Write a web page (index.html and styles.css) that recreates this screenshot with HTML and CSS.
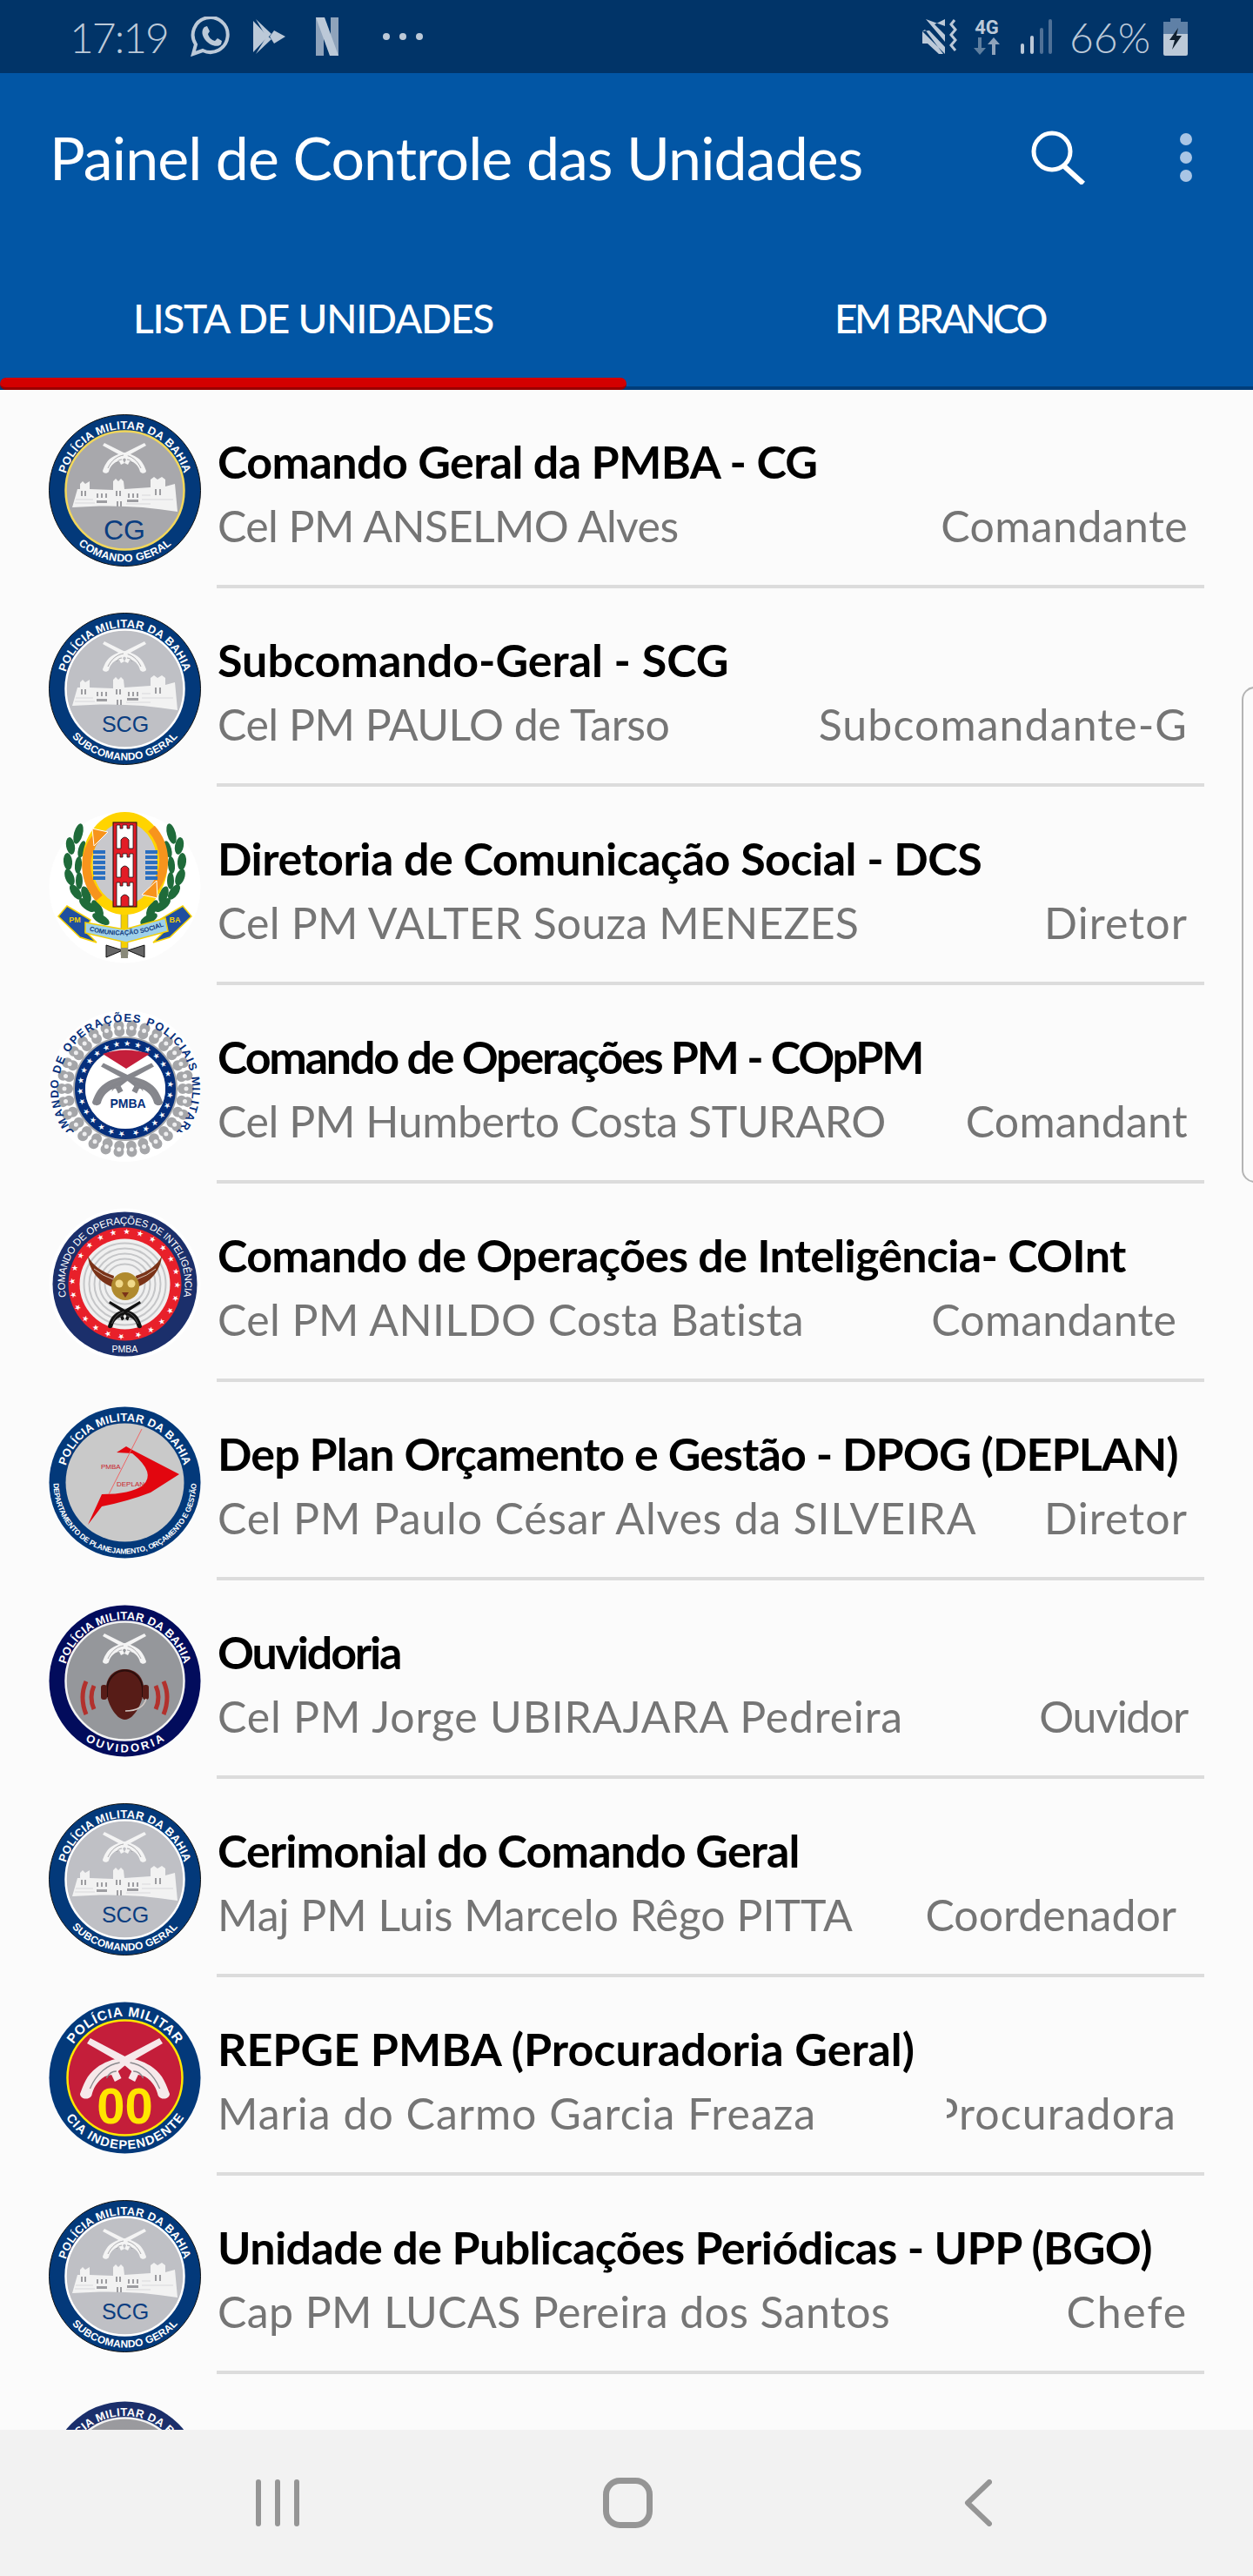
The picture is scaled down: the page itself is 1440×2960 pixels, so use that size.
FILE: index.html
```html
<!DOCTYPE html>
<html lang="pt-BR">
<head>
<meta charset="utf-8">
<title>Painel de Controle das Unidades</title>
<link rel="stylesheet" href="styles.css">
</head>
<body>
<svg class="sprite" width="0" height="0" aria-hidden="true">
<defs>
  <path id="arc-top" d="M17 87.5A70.5 70.5 0 0 1 158 87.5"/>
  <path id="arc-bot" d="M5.5 87.5A82 82 0 0 0 169.5 87.5"/>
  <path id="arc-big" d="M87.5 156.5A69 69 0 1 1 87.5 18.5A69 69 0 1 1 87.5 156.5"/>
  <path id="arc-cop" d="M88 168A77 77 0 1 1 88 14A77 77 0 1 1 88 168"/>
  <path id="arc-stars-a" d="M87.5 145A57.5 57.5 0 1 1 87.5 30A57.5 57.5 0 1 1 87.5 145"/>
  <path id="arc-stars-b" d="M88 140A49 49 0 1 1 88 42A49 49 0 1 1 88 140"/>
  <path id="arc-ban" d="M46 137Q88 150 133 132"/>
  <clipPath id="cop-clip"><rect x="0" y="0" width="175" height="141"/></clipPath>
  <g id="pistol">
    <path d="M0 4L2 1L24 12C30 13 36 15 40 18C46 22 48 28 50 33C50 36 45 37 43 34C42 30 40 26 35 23L31 22L29 26L25 24L27 20L22 16Z"/>
    <path fill="none" stroke="#8a8a8e" stroke-width=".7" d="M26 15C33 16 40 21 44 30M28 20C31 20 33 22 34 24"/>
  </g>
  <g id="pistols">
    <use href="#pistol" transform="translate(62 32)"/>
    <use href="#pistol" transform="translate(112 32) scale(-1 1)"/>
  </g>
  <g id="fort">
    <path fill="#f2f2f2" d="M0 35L6 14L9 14L9 8L12 5L15 8L20 5L20 14L47 15L47 5L50 2L53 5L56 2L59 5L60 14L90 12L90 3L94 0L98 3L103 0L107 3L107 11L118 8L121 40C80 33 40 32 0 35Z"/>
    <g fill="#9d9da1">
      <rect x="10" y="16" width="2" height="6"/><rect x="14" y="16" width="2" height="6"/>
      <rect x="28" y="19" width="2" height="5"/><rect x="33" y="19" width="2" height="5"/><rect x="38" y="19" width="2" height="5"/>
      <rect x="50" y="16" width="2" height="6"/><rect x="54" y="16" width="2" height="6"/>
      <rect x="64" y="19" width="2" height="5"/><rect x="69" y="19" width="2" height="5"/><rect x="74" y="19" width="2" height="5"/>
      <rect x="95" y="14" width="2" height="7"/><rect x="100" y="14" width="2" height="7"/>
      <rect x="28" y="27" width="12" height="3"/><rect x="63" y="26" width="13" height="3"/>
      <rect x="51" y="28" width="2" height="6"/><rect x="55" y="28" width="2" height="6"/>
    </g>
    <path fill="none" stroke="#cfcfd2" stroke-width=".7" d="M4 26H24M3 30H26M62 31H90M80 26H116M80 21H90"/>
  </g>
  <g id="cop-star-ring">
    <text class="logo-stars"><textPath href="#arc-stars-b" textLength="300">★★★★★★★★★★★★★★★★★★★★★★★★★★</textPath></text>
  </g>
</defs>
</svg>

<div class="screen">
  <header class="status">
    <div class="status-side">
      <span class="clock">17:19</span>
      <svg class="st-wa" viewBox="0 0 46 46"><path fill="none" stroke="#bcc9d8" stroke-width="4" d="M3 43L6 32A20 20 0 1 1 14 39Z"/><path fill="#bcc9d8" d="M16 12L19 11L22 17L20 20C21 24 24 27 28 28L31 25L36 28L35 32C30 36 22 33 17 27C13 22 12 16 16 12Z"/></svg>
      <svg class="st-play" viewBox="0 0 37 40"><path fill="#bcc9d8" d="M0 2L17 20L0 38Z"/><path fill="#bcc9d8" d="M3 0L21 17L16 22Z"/><path fill="#bcc9d8" d="M3 40L21 23L16 19Z"/><path fill="#bcc9d8" d="M24 13L37 20L24 28L19 20Z"/></svg>
      <svg class="st-n" viewBox="0 0 26 44"><path fill="#8fa3bb" d="M0 0H9V44H0Z"/><path fill="#8fa3bb" d="M17 0H26V44H17Z"/><path fill="#bcc9d8" d="M0 0H10L26 44H16Z"/></svg>
      <svg class="st-more" viewBox="0 0 46 8"><circle cx="4" cy="4" r="4" fill="#bcc9d8"/><circle cx="23" cy="4" r="4" fill="#bcc9d8"/><circle cx="42" cy="4" r="4" fill="#bcc9d8"/></svg>
    </div>
    <div class="status-side">
      <svg class="st-mute" viewBox="0 0 42 40"><path fill="#bcc9d8" d="M0 14L8 13L26 32V40ZM0 14V28L6 28L19 40H24L3 12ZM4 0L26 26V8ZM14 6L26 0V18Z"/><path fill="none" stroke="#bcc9d8" stroke-width="3" d="M37 1L33 6L38 12L33 18L38 24L33 30L38 36"/></svg>
      <div class="st-net"><span class="net-label">4G</span><svg class="net-arrows" viewBox="0 0 32 20"><path fill="#5f7f9f" d="M6 0H10V12H15L8 20L1 12H6Z"/><path fill="#8fa3bb" d="M22 20H26V8H31L24 0L17 8H22Z"/></svg></div>
      <svg class="st-sig" viewBox="0 0 37 40"><rect x="0" y="28" width="4" height="12" rx="2" fill="#bcc9d8"/><rect x="11" y="19" width="4" height="21" rx="2" fill="#bcc9d8"/><rect x="22" y="10" width="4" height="30" rx="2" fill="#4f7096"/><rect x="32" y="0" width="4" height="40" rx="2" fill="#4f7096"/></svg>
      <span class="pct">66%</span>
      <svg class="st-bat" viewBox="0 0 28 43"><path fill="#5f80a6" d="M8 0H20V4H28V18H0V4H8Z"/><path fill="#bcc9d8" d="M0 18H28V41Q28 43 26 43H2Q0 43 0 41Z"/><path fill="#10202f" d="M17 11L7 25H13L10 36L21 20H15Z"/></svg>
    </div>
  </header>

  <section class="appbar">
    <div class="toolbar">
      <h1 class="title">Painel de Controle das Unidades</h1>
      <svg class="ic-search" viewBox="0 0 62 62"><circle cx="24" cy="24" r="21" fill="none" stroke="#fff" stroke-width="5"/><path d="M38 41L60 61" stroke="#fff" stroke-width="6"/></svg>
      <svg class="ic-more" viewBox="0 0 14 56"><circle cx="7" cy="7" r="7" fill="#a9c5e5"/><circle cx="7" cy="28" r="7" fill="#a9c5e5"/><circle cx="7" cy="49" r="7" fill="#a9c5e5"/></svg>
    </div>
    <nav class="tabs">
      <div class="tab tab-active ls-n12">LISTA DE UNIDADES</div>
      <div class="tab ls-n35">EM BRANCO</div>
    </nav>
  </section>

  <main class="list">
    <article class="row">
      <svg class="logo" viewBox="0 0 175 175">
        <circle cx="87.5" cy="87.5" r="87" fill="#03397a" stroke="#111" stroke-width="1"/>
        <circle cx="87.5" cy="87.5" r="68" fill="#a8a8ac" stroke="#f2d75a" stroke-width="2.5"/>
        <use href="#pistols" fill="#f4f4f4"/><use href="#fort" x="27" y="72"/>
        <text class="logo-big" x="87" y="144" font-size="32">CG</text>
        <text class="logo-ring" font-size="13"><textPath href="#arc-top" startOffset="50%" textLength="182">POLÍCIA MILITAR DA BAHIA</textPath></text>
        <text class="logo-ring" font-size="12.5"><textPath href="#arc-bot" startOffset="50%" textLength="117">COMANDO GERAL</textPath></text>
      </svg>
      <div class="body"><div class="name ls-n06">Comando Geral da PMBA - CG</div><div class="sub"><span class="person ls-n06">Cel PM ANSELMO Alves</span><span class="role ls-p04">Comandante</span></div></div>
    </article>
    <article class="row">
      <svg class="logo" viewBox="0 0 175 175">
        <circle cx="87.5" cy="87.5" r="87" fill="#03397a" stroke="#111" stroke-width="1"/>
        <circle cx="87.5" cy="87.5" r="68" fill="#bfc0c5" stroke="#fff" stroke-width="2.5"/>
        <use href="#pistols" fill="#f4f4f4"/><use href="#fort" x="27" y="72"/>
        <text class="logo-big" x="88" y="137" font-size="25">SCG</text>
        <text class="logo-ring" font-size="13"><textPath href="#arc-top" startOffset="50%" textLength="182">POLÍCIA MILITAR DA BAHIA</textPath></text>
        <text class="logo-ring" font-size="12"><textPath href="#arc-bot" startOffset="50%" textLength="137">SUBCOMANDO GERAL</textPath></text>
      </svg>
      <div class="body"><div class="name">Subcomando-Geral - SCG</div><div class="sub"><span class="person ls-n05">Cel PM PAULO de Tarso</span><span class="role ls-p11">Subcomandante-G</span></div></div>
    </article>
    <article class="row">
      <svg class="logo" viewBox="0 0 175 175">
        <circle cx="87.5" cy="87.5" r="87" fill="#fff"/>
        <g fill="#1f6b3a">
          <ellipse cx="34" cy="26" rx="5" ry="12" transform="rotate(15 34 26)"/><ellipse cx="25" cy="40" rx="5" ry="10" transform="rotate(-10 25 40)"/><ellipse cx="38" cy="44" rx="4" ry="10" transform="rotate(15 38 44)"/><ellipse cx="22" cy="58" rx="5" ry="10" transform="rotate(-5 22 58)"/><ellipse cx="34" cy="62" rx="4" ry="10" transform="rotate(5 34 62)"/><ellipse cx="24" cy="76" rx="5" ry="10" transform="rotate(-20 24 76)"/><ellipse cx="35" cy="80" rx="4" ry="10"/><ellipse cx="31" cy="93" rx="5" ry="10" transform="rotate(-35 31 93)"/><ellipse cx="43" cy="96" rx="5" ry="10" transform="rotate(-20 43 96)"/><ellipse cx="44" cy="108" rx="5" ry="11" transform="rotate(-50 44 108)"/><ellipse cx="56" cy="112" rx="5" ry="11" transform="rotate(-30 56 112)"/><ellipse cx="60" cy="124" rx="5" ry="11" transform="rotate(-60 60 124)"/>
        </g>
        <g fill="#1f6b3a" transform="translate(175 0) scale(-1 1)">
          <ellipse cx="34" cy="26" rx="5" ry="12" transform="rotate(15 34 26)"/><ellipse cx="25" cy="40" rx="5" ry="10" transform="rotate(-10 25 40)"/><ellipse cx="38" cy="44" rx="4" ry="10" transform="rotate(15 38 44)"/><ellipse cx="22" cy="58" rx="5" ry="10" transform="rotate(-5 22 58)"/><ellipse cx="34" cy="62" rx="4" ry="10" transform="rotate(5 34 62)"/><ellipse cx="24" cy="76" rx="5" ry="10" transform="rotate(-20 24 76)"/><ellipse cx="35" cy="80" rx="4" ry="10"/><ellipse cx="31" cy="93" rx="5" ry="10" transform="rotate(-35 31 93)"/><ellipse cx="43" cy="96" rx="5" ry="10" transform="rotate(-20 43 96)"/><ellipse cx="44" cy="108" rx="5" ry="11" transform="rotate(-50 44 108)"/><ellipse cx="56" cy="112" rx="5" ry="11" transform="rotate(-30 56 112)"/><ellipse cx="60" cy="124" rx="5" ry="11" transform="rotate(-60 60 124)"/>
        </g>
        <rect x="83" y="115" width="8" height="50" fill="#f5d000" stroke="#777" stroke-width=".6"/>
        <path fill="#666" stroke="#111" stroke-width="1" d="M66 154L85 160L66 168ZM110 154L91 160L110 168Z"/>
        <rect x="83" y="157" width="8" height="12" fill="#8a8a7a"/>
        <ellipse cx="87.5" cy="60" rx="44" ry="53" fill="#c8c8cc"/>
        <ellipse cx="87.5" cy="60" rx="43" ry="53" fill="none" stroke="#ffd400" stroke-width="12"/>
        <path fill="none" stroke="#f7941d" stroke-width="10" d="M55 30C38 50 40 80 58 100"/>
        <path fill="none" stroke="#f7941d" stroke-width="10" d="M120 90C137 70 136 40 118 20"/>
        <path fill="#f7941d" stroke="#fff" stroke-width="1" d="M50 20L68 24L52 40ZM125 100L107 96L124 80Z"/>
        <path fill="#2a6fc0" d="M51 45H65V49H51ZM51 51H65V55H51ZM51 57H65V61H51ZM51 63H65V67H51ZM51 69H65V73H51ZM51 75H65V79H51ZM111 45H125V49H111ZM111 51H125V55H111ZM111 57H125V61H111ZM111 63H125V67H111ZM111 69H125V73H111ZM111 75H125V79H111Z"/>
        <rect x="74" y="13" width="27" height="97" fill="#e21d26" stroke="#111" stroke-width="1"/>
        <g fill="#fff" stroke="#111" stroke-width=".8">
          <path d="M78 16H82V20H85V16H90V20H93V16H97V43H92V33Q87.500 27 83 33V43H78Z"/>
          <path d="M78 49H82V53H85V49H90V53H93V49H97V76H92V66Q87.500 60 83 66V76H78Z"/>
          <path d="M78 82H82V86H85V82H90V86H93V82H97V109H92V99Q87.500 93 83 99V109H78Z"/>
        </g>
        <path fill="#1f4fa0" stroke="#f5d000" stroke-width="1.500" d="M11 121L21 109L48 125L42 138L55 151L36 145ZM164 121L154 109L127 125L133 138L120 151L139 145Z"/>
        <path fill="#9fd0ea" stroke="#f5d000" stroke-width="1.500" d="M42 128L87 136L134 123L137 138L89 151L42 140Z"/>
        <text class="logo-ban" font-size="7.500"><textPath href="#arc-ban" startOffset="50%" textLength="88">COMUNICAÇÃO SOCIAL</textPath></text>
        <text class="logo-ban-y" x="30" y="128" font-size="9">PM</text><text class="logo-ban-y" x="145" y="128" font-size="9">BA</text>
      </svg>
      <div class="body"><div class="name ls-n05">Diretoria de Comunicação Social - DCS</div><div class="sub"><span class="person ls-p02">Cel PM VALTER Souza MENEZES</span><span class="role ls-p11">Diretor</span></div></div>
    </article>
    <article class="row">
      <svg class="logo" viewBox="0 0 175 175">
        <circle cx="88" cy="88" r="87" fill="#fff"/>
        <g fill="none" stroke="#a5a6a9" stroke-linecap="round" stroke-dasharray="0 1">
          <circle cx="88" cy="91" r="73" stroke-width="12" pathLength="30"/>
          <circle cx="88" cy="91" r="66" stroke-width="12" pathLength="30"/>
        </g>
        <circle cx="88" cy="91" r="70" fill="none" stroke="#eeeeef" stroke-width="5" stroke-linecap="round" stroke-dasharray="0 1" pathLength="30"/>
        <circle cx="88" cy="91" r="60" fill="#a5a6a9"/>
        <circle cx="88" cy="91" r="52" fill="none" stroke="#052f7c" stroke-width="12"/>
        <circle cx="88" cy="91" r="46" fill="#fff"/>
        <use href="#cop-star-ring" fill="#fff"/>
        <path fill="#c41e3a" d="M62 51Q88 42 116 51L89 68Z"/>
        <g fill="#85868c"><use href="#pistol" transform="translate(60 60) scale(1.42 1.4)"/><use href="#pistol" transform="translate(121 60) scale(-1.42 1.4)"/></g>
        <text class="logo-pmba" x="91" y="113" font-size="14">PMBA</text>
        <g clip-path="url(#cop-clip)"><text class="logo-cop" font-size="13"><textPath href="#arc-cop" startOffset="50%" textLength="376">COMANDO DE OPERAÇÕES POLICIAIS MILITARES</textPath></text></g>
      </svg>
      <div class="body"><div class="name ls-n22">Comando de Operações PM - COpPM</div><div class="sub"><span class="person ls-n04">Cel PM Humberto Costa STURARO</span><span class="role ls-p02">Comandant</span></div></div>
    </article>
    <article class="row">
      <svg class="logo" viewBox="0 0 175 175">
        <circle cx="87.5" cy="87.5" r="87" fill="#fff"/>
        <circle cx="87.5" cy="87.5" r="83" fill="#1b2f6b"/>
        <circle cx="87.5" cy="87.5" r="65" fill="#e8202a"/>
        <circle cx="87.5" cy="87.5" r="52" fill="#f0f0f0"/>
        <g fill="none" stroke="#c5c6c8" stroke-width="2">
          <circle cx="87.5" cy="87.5" r="47"/><circle cx="87.5" cy="87.500" r="41"/><circle cx="87.5" cy="87.500" r="35"/><circle cx="87.5" cy="87.500" r="29"/><circle cx="87.5" cy="87.500" r="23"/>
        </g>
        <text class="logo-stars"><textPath href="#arc-stars-a" textLength="350">★★★★★★★★★★★★★★★★★★★★★★★★</textPath></text>
        <path fill="#7a3318" d="M45 55C46 70 56 84 73 91L75 78C62 74 50 66 45 55ZM130 55C129 70 119 84 102 91L100 78C113 74 125 66 130 55Z"/>
        <path fill="none" stroke="#f0e6dc" stroke-width=".8" d="M52 70Q62 78 74 82M123 70Q113 78 101 82"/>
        <circle cx="88" cy="90" r="16" fill="#b08a2e"/>
        <circle cx="81" cy="87" r="4.500" fill="#f1d98a"/><circle cx="95" cy="87" r="4.500" fill="#f1d98a"/><path fill="#7a3318" d="M84 97H92L88 103Z"/>
        <g fill="#111"><use href="#pistol" transform="translate(69 106) scale(.76 .9)"/><use href="#pistol" transform="translate(106 106) scale(-.76 .9)"/></g>
        <text class="logo-ring logo-plain" font-size="11.500"><textPath href="#arc-big" startOffset="50%" textLength="246">COMANDO DE OPERAÇÕES DE INTELIGÊNCIA</textPath></text>
        <text class="logo-big logo-white" x="87.500" y="166" font-size="10.500">PMBA</text>
      </svg>
      <div class="body"><div class="name ls-n07">Comando de Operações de Inteligência- COInt</div><div class="sub"><span class="person ls-p04">Cel PM ANILDO Costa Batista</span><span class="role role-inset ls-p02">Comandante</span></div></div>
    </article>
    <article class="row">
      <svg class="logo" viewBox="0 0 175 175">
        <circle cx="87.5" cy="87.5" r="87" fill="#03397a"/>
        <circle cx="87.5" cy="87.5" r="68" fill="#c9c9c9"/>
        <path fill="#e2060f" d="M78 53L89 46L96 50L150 78L117 99Q91 109 61 115L45 136L61 101Q94 101 108 91Q124 77 96 54Z"/>
        <path stroke="#e66" stroke-width="1" d="M107 26L69 101"/>
        <text class="logo-red" x="60" y="72" font-size="8">PMBA</text><text class="logo-red" x="78" y="92" font-size="8">DEPLAN</text>
        <text class="logo-ring" font-size="13"><textPath href="#arc-top" startOffset="50%" textLength="182">POLÍCIA MILITAR DA BAHIA</textPath></text>
        <text class="logo-ring" font-size="8.600"><textPath href="#arc-bot" startOffset="50%" textLength="255">DEPARTAMENTO DE PLANEJAMENTO, ORÇAMENTO E GESTÃO</textPath></text>
      </svg>
      <div class="body"><div class="name ls-n09">Dep Plan Orçamento e Gestão - DPOG (DEPLAN)</div><div class="sub"><span class="person ls-p08">Cel PM Paulo César Alves da SILVEIRA</span><span class="role ls-p11">Diretor</span></div></div>
    </article>
    <article class="row">
      <svg class="logo" viewBox="0 0 175 175">
        <circle cx="87.5" cy="87.5" r="87" fill="#020c5c"/>
        <circle cx="87.5" cy="87.5" r="68" fill="#95979b" stroke="#f2f2f2" stroke-width="2.500"/>
        <use href="#pistols" fill="#f4f4f4"/>
        <path fill="#571c17" d="M66 96C66 82 76 74 87.500 74C99 74 109 82 109 96C109 112 98 132 87.500 132C77 132 66 112 66 96Z"/>
        <path fill="none" stroke="#2b0e0c" stroke-width="2" d="M67 106V98A20 22 0 0 1 108 98V106"/>
        <rect x="60" y="92" width="7" height="17" rx="3" fill="#571c17"/><rect x="108" y="92" width="7" height="17" rx="3" fill="#571c17"/>
        <path fill="none" stroke="#d3c9c5" stroke-width="1.500" d="M112 108Q108 122 88 122"/>
        <path fill="none" stroke="#b2312d" stroke-width="5" d="M43 88Q35 106 43 126M52 93Q46 106 52 120M132 88Q140 106 132 126M123 93Q129 106 123 120"/>
        <text class="logo-ring" font-size="13"><textPath href="#arc-top" startOffset="50%" textLength="182">POLÍCIA MILITAR DA BAHIA</textPath></text>
        <text class="logo-ring" font-size="13"><textPath href="#arc-bot" startOffset="50%" textLength="97">OUVIDORIA</textPath></text>
      </svg>
      <div class="body"><div class="name ls-n22">Ouvidoria</div><div class="sub"><span class="person ls-p08">Cel PM Jorge UBIRAJARA Pedreira</span><span class="role ls-n13">Ouvidor</span></div></div>
    </article>
    <article class="row">
      <svg class="logo" viewBox="0 0 175 175">
        <circle cx="87.5" cy="87.5" r="87" fill="#03397a" stroke="#111" stroke-width="1"/>
        <circle cx="87.5" cy="87.5" r="68" fill="#bfc0c5" stroke="#fff" stroke-width="2.5"/>
        <use href="#pistols" fill="#f4f4f4"/><use href="#fort" x="27" y="72"/>
        <text class="logo-big" x="88" y="137" font-size="25">SCG</text>
        <text class="logo-ring" font-size="13"><textPath href="#arc-top" startOffset="50%" textLength="182">POLÍCIA MILITAR DA BAHIA</textPath></text>
        <text class="logo-ring" font-size="12"><textPath href="#arc-bot" startOffset="50%" textLength="137">SUBCOMANDO GERAL</textPath></text>
      </svg>
      <div class="body"><div class="name ls-n09">Cerimonial do Comando Geral</div><div class="sub"><span class="person">Maj PM Luis Marcelo Rêgo PITTA</span><span class="role role-inset">Coordenador</span></div></div>
    </article>
    <article class="row">
      <svg class="logo" viewBox="0 0 175 175">
        <circle cx="87.5" cy="87.5" r="87" fill="#03397a"/>
        <circle cx="87.5" cy="87.5" r="66" fill="#c41e3a" stroke="#ffe600" stroke-width="2.500"/>
        <g fill="#f6e9ea"><use href="#pistol" transform="translate(44 40) scale(1.9 2)"/><use href="#pistol" transform="translate(131 40) scale(-1.9 2)"/></g>
        <text class="logo-big logo-yellow" x="87.500" y="140" font-size="58">00</text>
        <text class="logo-ring" font-size="15.500"><textPath href="#arc-top" startOffset="50%" textLength="140">POLÍCIA MILITAR</textPath></text>
        <text class="logo-ring" font-size="14.500"><textPath href="#arc-bot" startOffset="50%" textLength="160">CIA INDEPENDENTE</textPath></text>
      </svg>
      <div class="body"><div class="name">REPGE PMBA (Procuradoria Geral)</div><div class="sub"><span class="person ls-p10">Maria do Carmo Garcia Freaza</span><span class="role role-inset role-clip ls-p11">Procuradora</span></div></div>
    </article>
    <article class="row">
      <svg class="logo" viewBox="0 0 175 175">
        <circle cx="87.5" cy="87.5" r="87" fill="#03397a" stroke="#111" stroke-width="1"/>
        <circle cx="87.5" cy="87.5" r="68" fill="#bfc0c5" stroke="#fff" stroke-width="2.5"/>
        <use href="#pistols" fill="#f4f4f4"/><use href="#fort" x="27" y="72"/>
        <text class="logo-big" x="88" y="137" font-size="25">SCG</text>
        <text class="logo-ring" font-size="13"><textPath href="#arc-top" startOffset="50%" textLength="182">POLÍCIA MILITAR DA BAHIA</textPath></text>
        <text class="logo-ring" font-size="12"><textPath href="#arc-bot" startOffset="50%" textLength="137">SUBCOMANDO GERAL</textPath></text>
      </svg>
      <div class="body"><div class="name ls-n06">Unidade de Publicações Periódicas - UPP (BGO)</div><div class="sub"><span class="person ls-p04">Cap PM LUCAS Pereira dos Santos</span><span class="role ls-p18">Chefe</span></div></div>
    </article>
    <article class="row">
      <svg class="logo logo-low" viewBox="0 0 175 175">
        <circle cx="87.5" cy="87.5" r="87" fill="#1b2f6b"/>
        <circle cx="87.5" cy="87.5" r="68" fill="#9a9a9e" stroke="#f2f2f2" stroke-width="2.500"/>
        <text class="logo-ring" font-size="13"><textPath href="#arc-top" startOffset="50%" textLength="182">POLÍCIA MILITAR DA BAHIA</textPath></text>
      </svg>
      <div class="body"><div class="name">Polícia Militar da Bahia</div></div>
    </article>
  </main>

  <footer class="navbar">
    <svg class="nav-recents" viewBox="0 0 50 54"><path d="M3 3V51M25 3V51M47 3V51" stroke="#959595" stroke-width="6" stroke-linecap="round"/></svg>
    <svg class="nav-home" viewBox="0 0 57 58"><rect x="3.500" y="3.500" width="50" height="51" rx="16" fill="none" stroke="#959595" stroke-width="7"/></svg>
    <svg class="nav-back" viewBox="0 0 32 54"><path d="M29 3L4 27L29 51" fill="none" stroke="#959595" stroke-width="6" stroke-linecap="round" stroke-linejoin="round"/></svg>
  </footer>
  <div class="edge-handle"></div>
</div>
</body>
</html>
```

FILE: styles.css
```css
html, body { margin: 0; padding: 0; }
body { width: 1440px; height: 2960px; overflow: hidden; background: #fafafa; font-family: "Lato", "Open Sans", sans-serif; }
.sprite { position: absolute; }
.screen { position: relative; display: flex; flex-direction: column; width: 1440px; height: 2960px; overflow: hidden; }

.status { flex: none; height: 84px; box-sizing: border-box; padding: 0 75px 0 80px; display: flex; justify-content: space-between; align-items: center; background: #013468; }
.status-side { display: flex; align-items: center; }
.clock { font-size: 48px; font-weight: 300; letter-spacing: -2px; color: #bcc9d8; width: 139px; }
.st-wa { width: 46px; height: 46px; }
.st-play { width: 37px; height: 40px; margin-left: 26px; }
.st-n { width: 26px; height: 44px; margin-left: 35px; }
.st-more { width: 46px; height: 8px; margin-left: 51px; }
.st-mute { width: 42px; height: 40px; }
.st-net { width: 32px; margin-left: 16px; display: flex; flex-direction: column; align-items: center; }
.net-label { font: 700 22px/22px "Roboto", sans-serif; color: #bcc9d8; }
.net-arrows { width: 32px; height: 20px; }
.st-sig { width: 37px; height: 40px; margin-left: 23px; }
.pct { font-size: 48px; font-weight: 300; color: #bcc9d8; margin-left: 19px; width: 108px; }
.st-bat { width: 28px; height: 43px; }

.appbar { flex: none; height: 364px; box-sizing: border-box; background: #0256a5; border-bottom: 4px solid #003d7a; }
.toolbar { display: flex; align-items: center; height: 194px; padding: 0 70px 0 57px; }
.title { flex: 1; margin: 0; font-size: 68px; font-weight: 400; line-height: 76px; letter-spacing: -0.9px; color: #fff; white-space: nowrap; }
.ic-search { width: 62px; height: 62px; margin-right: 109px; }
.ic-more { width: 14px; height: 56px; }
.tabs { display: flex; height: 166px; }
.tab { flex: 1; display: flex; align-items: center; justify-content: center; padding-top: 8px; box-sizing: border-box; font-size: 46px; font-weight: 500; color: #fff; }
.tab-active { position: relative; }
.tab-active::after { content: ""; position: absolute; left: 0; right: 0; bottom: -4px; height: 14px; box-sizing: border-box; background: #d30000; border-bottom: 3px solid #990000; border-radius: 7px; }

.list { flex: 1; min-height: 0; overflow: hidden; background: #fbfbfb; }
.row { display: flex; height: 228px; padding-left: 56px; }
.logo { flex: none; width: 175px; height: 175px; margin-top: 28px; }
.logo-low { margin-top: 31px; }
.body { width: 1135px; height: 228px; box-sizing: border-box; margin-left: 18px; border-bottom: 4px solid #dcdcdc; }
.name { padding-left: 1px; margin-top: 53px; font-size: 52px; line-height: 58px; font-weight: 700; color: #000; white-space: nowrap; }
.sub { display: flex; justify-content: space-between; padding-left: 1px; margin-top: 16px; font-size: 50px; line-height: 58px; color: #757575; white-space: nowrap; }
.role { padding-right: 19px; }
.role-inset { padding-right: 32px; }
.role-clip { width: 264px; display: flex; justify-content: flex-end; overflow: hidden; }

.ls-n35 { letter-spacing: -3.5px; }
.ls-n22 { letter-spacing: -2.2px; }
.ls-n13 { letter-spacing: -1.3px; }
.ls-n12 { letter-spacing: -1.2px; }
.ls-n09 { letter-spacing: -0.9px; }
.ls-n07 { letter-spacing: -0.7px; }
.ls-n06 { letter-spacing: -0.6px; }
.ls-n05 { letter-spacing: -0.5px; }
.ls-n04 { letter-spacing: -0.4px; }
.ls-p02 { letter-spacing: 0.2px; }
.ls-p04 { letter-spacing: 0.4px; }
.ls-p08 { letter-spacing: 0.8px; }
.ls-p10 { letter-spacing: 1px; }
.ls-p11 { letter-spacing: 1.1px; }
.ls-p18 { letter-spacing: 1.8px; }

.navbar { position: absolute; left: 0; right: 0; bottom: 0; height: 168px; background: #f2f2f2; display: flex; align-items: center; }
.nav-recents { width: 50px; height: 54px; margin-left: 294px; }
.nav-home { width: 57px; height: 58px; margin-left: 349px; }
.nav-back { width: 32px; height: 54px; margin-left: 358px; }
.edge-handle { position: absolute; left: 1427px; top: 789px; width: 30px; height: 570px; box-sizing: border-box; border: 2px solid #b4b4b4; border-radius: 18px; }

.logo-ring { font-family: "Liberation Sans", sans-serif; font-weight: 700; fill: #fff; text-anchor: middle; }
.logo-plain { font-weight: 400; }
.logo-big { font-family: "Liberation Sans", sans-serif; fill: #0a3d80; text-anchor: middle; }
.logo-white { fill: #fff; }
.logo-yellow { fill: #ffe600; font-weight: 700; }
.logo-stars { font-family: "DejaVu Sans", sans-serif; font-size: 9px; fill: #fff; }
.logo-cop { font-family: "Liberation Sans", sans-serif; font-weight: 700; fill: #052f7c; text-anchor: middle; }
.logo-pmba { font-family: "Liberation Sans", sans-serif; font-weight: 700; fill: #052f7c; text-anchor: middle; }
.logo-ban { font-family: "Liberation Sans", sans-serif; font-weight: 700; fill: #123a7d; text-anchor: middle; }
.logo-ban-y { font-family: "Liberation Sans", sans-serif; font-weight: 700; fill: #f5d000; text-anchor: middle; }
.logo-red { font-family: "Liberation Sans", sans-serif; fill: #c8232c; }
```
